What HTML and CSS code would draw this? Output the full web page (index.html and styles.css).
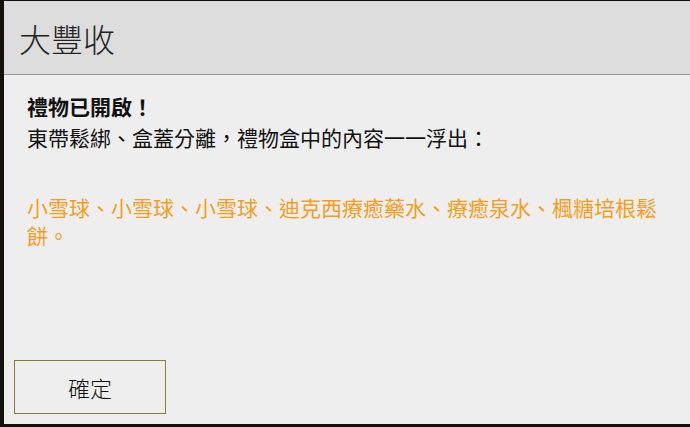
FILE: index.html
```html
<!DOCTYPE html>
<html lang="zh-Hant">
<head>
    <meta charset="UTF-8">
    <meta name="viewport" content="width=device-width, initial-scale=1.0">
    <title>大豐收</title>
    <link rel="stylesheet" href="styles.css">
</head>
<body>
    <div class="dialog">
        <div class="dialog-header">
            <h1>大豐收</h1>
        </div>

        <div class="dialog-body">
            <p class="lead">禮物已開啟！</p>
            <p>東帶鬆綁、盒蓋分離，禮物盒中的內容一一浮出：</p>
            <p class="items">小雪球、小雪球、小雪球、迪克西療癒藥水、療癒泉水、楓糖培根鬆餅。</p>
        </div>

        <div class="dialog-footer">
            <button>確定</button>
        </div>
    </div>
</body>
</html>
```

FILE: styles.css
```css
html, body {
    height: 100%;
}
body {
    margin: 0;
    background: #14100b;
    overflow: hidden;
    font-family: "Noto Sans CJK TC", "Noto Sans", sans-serif;
    color: #111;
}
.dialog {
    margin: 1px 0 0 4px;
    height: 423px;
    display: flex;
    flex-direction: column;
    background: #eeeeee;
}
.dialog-header {
    height: 73px;
    display: flex;
    align-items: center;
    padding-left: 15px;
    background: #dddddd;
    border-bottom: 1px solid #999;
}
.dialog-header h1 {
    margin: 0;
    font-size: 32px;
    font-weight: 300;
    line-height: 1;
    color: #222;
}
.dialog-body {
    flex: 1;
    padding: 17px 23px 0;
    font-size: 21px;
    line-height: 28px;
}
.dialog-body p {
    margin: 0;
}
.dialog-body .lead {
    font-weight: bold;
    margin-bottom: 3px;
}
.dialog-body .items {
    margin-top: 42px;
    color: #f59d1e;
}
.dialog-footer {
    padding: 0 10px 10px;
}
button {
    width: 152px;
    height: 54px;
    background: transparent;
    border: 1px solid #8b7b3a;
    font-family: inherit;
    font-size: 22px;
    font-weight: 300;
    color: #111;
    padding: 0;
    cursor: pointer;
}
```
